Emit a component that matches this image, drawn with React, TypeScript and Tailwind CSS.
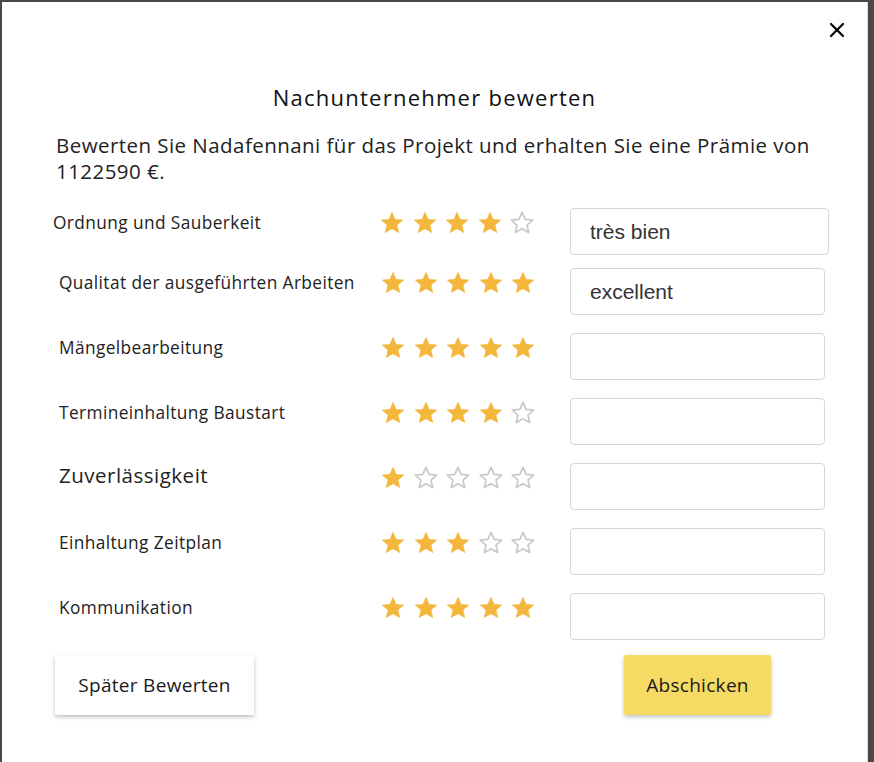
import { X } from 'lucide-react';

type Row = { label: string; rating: number; comment: string; big?: boolean };

const rows: Row[] = [
  { label: 'Ordnung und Sauberkeit', rating: 4, comment: 'très bien' },
  { label: 'Qualitat der ausgeführten Arbeiten', rating: 5, comment: 'excellent' },
  { label: 'Mängelbearbeitung', rating: 5, comment: '' },
  { label: 'Termineinhaltung Baustart', rating: 4, comment: '' },
  { label: 'Zuverlässigkeit', rating: 1, comment: '', big: true },
  { label: 'Einhaltung Zeitplan', rating: 3, comment: '' },
  { label: 'Kommunikation', rating: 5, comment: '' },
];

function Star({ filled }: { filled: boolean }) {
  return (
    <svg width="26" height="26" viewBox="0 0 24 24" className="shrink-0">
      <path
        d="M12 2.2l2.9 6.5 7 .6-5.3 4.6 1.6 6.9L12 17.2 5.8 20.8l1.6-6.9L2.1 9.3l7-.6z"
        fill={filled ? '#f3b73b' : 'none'}
        stroke={filled ? '#f3b73b' : '#c9c9c9'}
        strokeWidth={filled ? 0.6 : 1.6}
        strokeLinejoin="round"
      />
    </svg>
  );
}

function Stars({ value }: { value: number }) {
  return (
    <div className="flex gap-[6.5px]">
      {[1, 2, 3, 4, 5].map((i) => (
        <Star key={i} filled={i <= value} />
      ))}
    </div>
  );
}

export default function App() {
  return (
    <div className="w-[874px] h-[762px] bg-[#4a4a4a] pt-[2px] pl-[2px] pr-[6px] overflow-hidden">
      <div className="relative w-full h-full bg-white border-r border-[#d9d9d9] font-['Open_Sans',sans-serif] text-[#222]">
        {/* fermer */}
        <button className="absolute right-[18px] top-[16px] text-black">
          <X size={24} strokeWidth={2.2} />
        </button>

        <div className="pt-[80px] text-center text-[22px] leading-[30px] font-medium tracking-[1.25px] text-[#111]">
          Nachunternehmer bewerten
        </div>

        <p className="mt-[20px] pl-[54px] pr-[50px] text-[20.5px] leading-[26px] tracking-[0.45px] text-[#222]">
          Bewerten Sie Nadafennani für das Projekt und erhalten Sie eine Prämie von 1122590 €.
        </p>

        <div className="mt-[26px] flex flex-col">
          {rows.map((r, i) => (
            <div key={r.label} className={`flex items-start ${i === 0 ? 'h-[60px]' : 'h-[65px]'}`}>
              <div
                className={`w-[324px] ${i === 0 ? 'pl-[51px]' : 'pl-[57px]'} ${
                  r.big ? 'text-[20.5px] mt-[-3px] tracking-[0.5px]' : 'text-[17.3px] tracking-[0.4px]'
                } leading-[26px] text-[#222] whitespace-nowrap`}
              >
                {r.label}
              </div>
              <div className={`${i === 0 ? 'ml-[53px]' : 'ml-[54px]'}`}>
                <Stars value={r.rating} />
              </div>
              <div
                className={`${i === 0 ? 'ml-[35px] w-[259px]' : 'ml-[34px] w-[255px]'} mt-[-2px] h-[47px] rounded-[4px] border border-[#d6d6d6] flex items-center px-[19px] text-[21px] text-[#333] font-['Liberation_Sans',sans-serif]`}
              >
                {r.comment}
              </div>
            </div>
          ))}
        </div>

        <div className="mt-[-5px] flex items-center">
          <button className="ml-[53px] w-[199px] h-[60px] bg-white shadow-[0_2px_4px_rgba(0,0,0,0.25)] text-[19px] tracking-[0.3px] font-medium text-[#1a1a1a]">
            Später Bewerten
          </button>
          <button className="ml-[370px] w-[147px] h-[60px] rounded-[2px] bg-[#f5da63] shadow-[0_2px_4px_rgba(0,0,0,0.25)] text-[19px] tracking-[0.3px] font-medium text-[#1a1a1a]">
            Abschicken
          </button>
        </div>
      </div>
    </div>
  );
}
